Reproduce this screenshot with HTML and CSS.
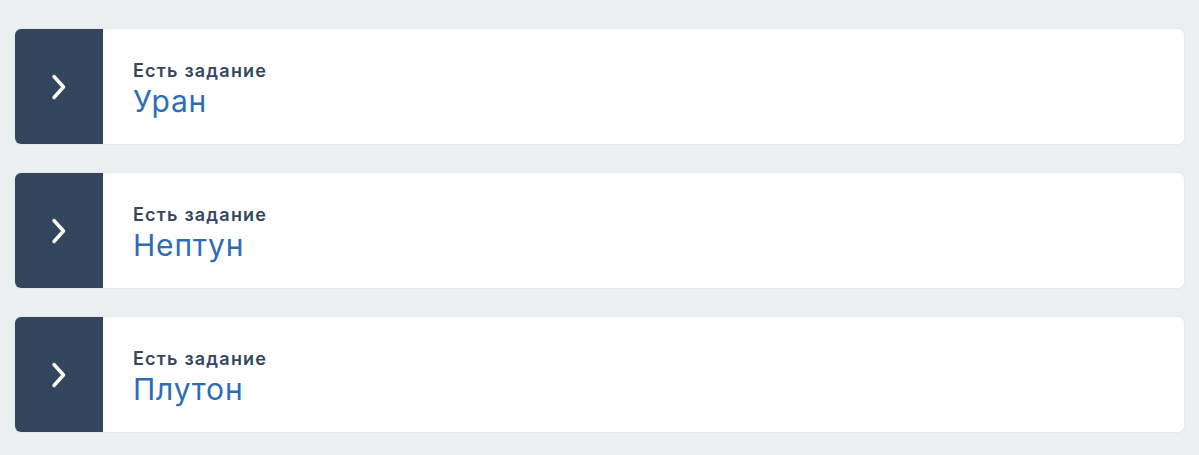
FILE: index.html
```html
<!DOCTYPE html>
<html lang="ru">
<head>
<meta charset="utf-8">
<link rel="stylesheet" href="styles.css">
</head>
<body>
<div class="list">
  <div class="card">
    <div class="card__toggle">
      <svg width="20" height="30" viewBox="0 0 20 30"><path d="M5 4.5 L14.5 15 L5 25.5" fill="none" stroke="#fff" stroke-width="3.4" stroke-linecap="round" stroke-linejoin="round"/></svg>
    </div>
    <div class="card__body">
      <div class="card__label">Есть задание</div>
      <div class="card__title">Уран</div>
    </div>
  </div>
  <div class="card">
    <div class="card__toggle">
      <svg width="20" height="30" viewBox="0 0 20 30"><path d="M5 4.5 L14.5 15 L5 25.5" fill="none" stroke="#fff" stroke-width="3.4" stroke-linecap="round" stroke-linejoin="round"/></svg>
    </div>
    <div class="card__body">
      <div class="card__label">Есть задание</div>
      <div class="card__title">Нептун</div>
    </div>
  </div>
  <div class="card">
    <div class="card__toggle">
      <svg width="20" height="30" viewBox="0 0 20 30"><path d="M5 4.5 L14.5 15 L5 25.5" fill="none" stroke="#fff" stroke-width="3.4" stroke-linecap="round" stroke-linejoin="round"/></svg>
    </div>
    <div class="card__body">
      <div class="card__label">Есть задание</div>
      <div class="card__title">Плутон</div>
    </div>
  </div>
</div>
</body>
</html>
```
FILE: styles.css
```css
html, body {
  margin: 0;
  background: #ebeff0;
}
body {
  font-family: Inter, "Noto Sans", sans-serif;
}
.list {
  display: flex;
  flex-direction: column;
  gap: 29px;
  padding: 29px 15px;
}
.card {
  display: flex;
  height: 115px;
  background: #fff;
  border-radius: 6px;
  overflow: hidden;
  box-shadow: 0 0 0 1px #e2e7e9;
}
.card__toggle {
  width: 88px;
  flex: none;
  background: #34465e;
  display: flex;
  align-items: center;
  justify-content: center;
}
.card__body {
  padding: 31px 30px 0 30px;
  display: flex;
  flex-direction: column;
}
.card__label {
  font-size: 18px;
  font-weight: 600;
  line-height: 22px;
  letter-spacing: 1.2px;
  color: #34465e;
}
.card__title {
  font-size: 30px;
  font-weight: 400;
  line-height: 36px;
  letter-spacing: 0.8px;
  color: #2e6db6;
  margin-top: 1px;
}
```
